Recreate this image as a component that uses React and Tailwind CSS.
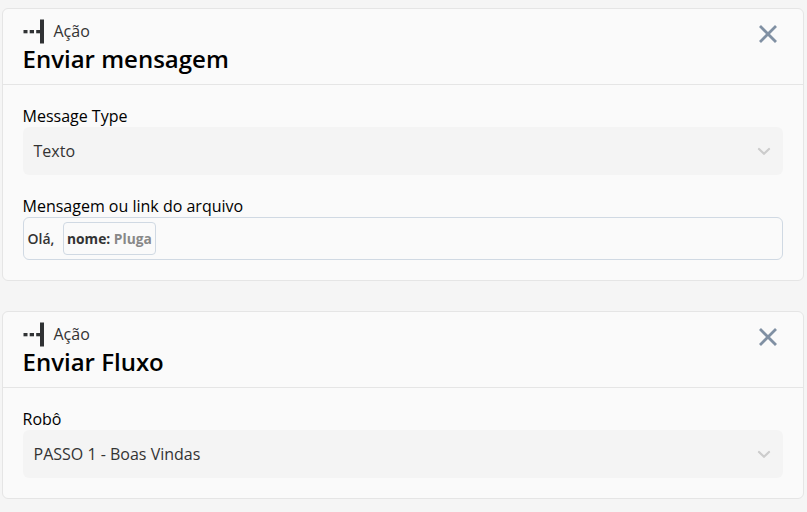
function ActionIcon() {
  return (
    <svg width="21.5" height="25" viewBox="0 0 21.5 25" className="shrink-0" fill="#303234">
      <rect x="0.5" y="11" width="4" height="3.3" />
      <rect x="6.7" y="11" width="4.3" height="3.3" />
      <rect x="13.2" y="11" width="4" height="3.3" />
      <rect x="17" y="0.5" width="4.4" height="24" />
    </svg>
  );
}

function Card({ title, className, children }) {
  return (
    <section className={`rounded-md border border-[#e5e5e5] bg-[#fafafa] ${className}`}>
      <header className="flex h-[76px] justify-between border-b border-[#e5e5e5] pl-[19.5px] pr-[26px]">
        <div className="pt-[10px]">
          <div className="flex h-6 items-center gap-[9.5px] text-base text-[#333]">
            <ActionIcon />
            <span>Ação</span>
          </div>
          <h2 className="text-2xl leading-8 font-semibold text-black">{title}</h2>
        </div>
        <svg width="18" height="18" viewBox="0 0 18 18" className="mt-4" stroke="#8090a3" strokeWidth="2.8">
          <path d="M1 1L17 17M17 1L1 17" />
        </svg>
      </header>
      <div className="px-5 pt-5">{children}</div>
    </section>
  );
}

function Label({ children }) {
  return <div className="-ml-[0.5px] h-[22px] text-base leading-[22px] text-black">{children}</div>;
}

function Select({ label, value }) {
  return (
    <div>
      <Label>{label}</Label>
      <div className="flex h-12 items-center justify-between rounded-md bg-[#f4f4f4] pr-3 pl-[10.5px] text-base text-[#333]">
        <span>{value}</span>
        <svg width="14" height="8" viewBox="0 0 14 8" fill="none" stroke="#ccc" strokeWidth="2.2" strokeLinecap="round">
          <path d="M2 2L7 6.7L12 2" />
        </svg>
      </div>
    </div>
  );
}

export default function App() {
  return (
    <main className="flex h-[512px] w-[807px] flex-col gap-[30px] overflow-hidden bg-[#f5f5f5] pt-2 pr-[3px] pl-[2px] font-['Open_Sans',sans-serif]">
      <Card title="Enviar mensagem" className="h-[273px]">
        <Select label="Message Type" value="Texto" />
        <div className="mt-5">
          <Label>Mensagem ou link do arquivo</Label>
          <div className="flex h-[43px] items-center gap-2 rounded-md border border-[#d0d9e3] pr-1 pl-[3.5px] text-[13.8px] font-bold text-[#333]">
            <span className="w-[27.5px] text-sm font-semibold">Olá,</span>
            <span className="flex h-[33px] items-center rounded border border-[#d0d9e3] px-[3px] pt-[2px] whitespace-pre">
              nome: <span className="text-[#888]">Pluga</span>
            </span>
          </div>
        </div>
      </Card>
      <Card title="Enviar Fluxo" className="h-[188px]">
        <Select label="Robô" value="PASSO 1 - Boas Vindas" />
      </Card>
    </main>
  );
}
